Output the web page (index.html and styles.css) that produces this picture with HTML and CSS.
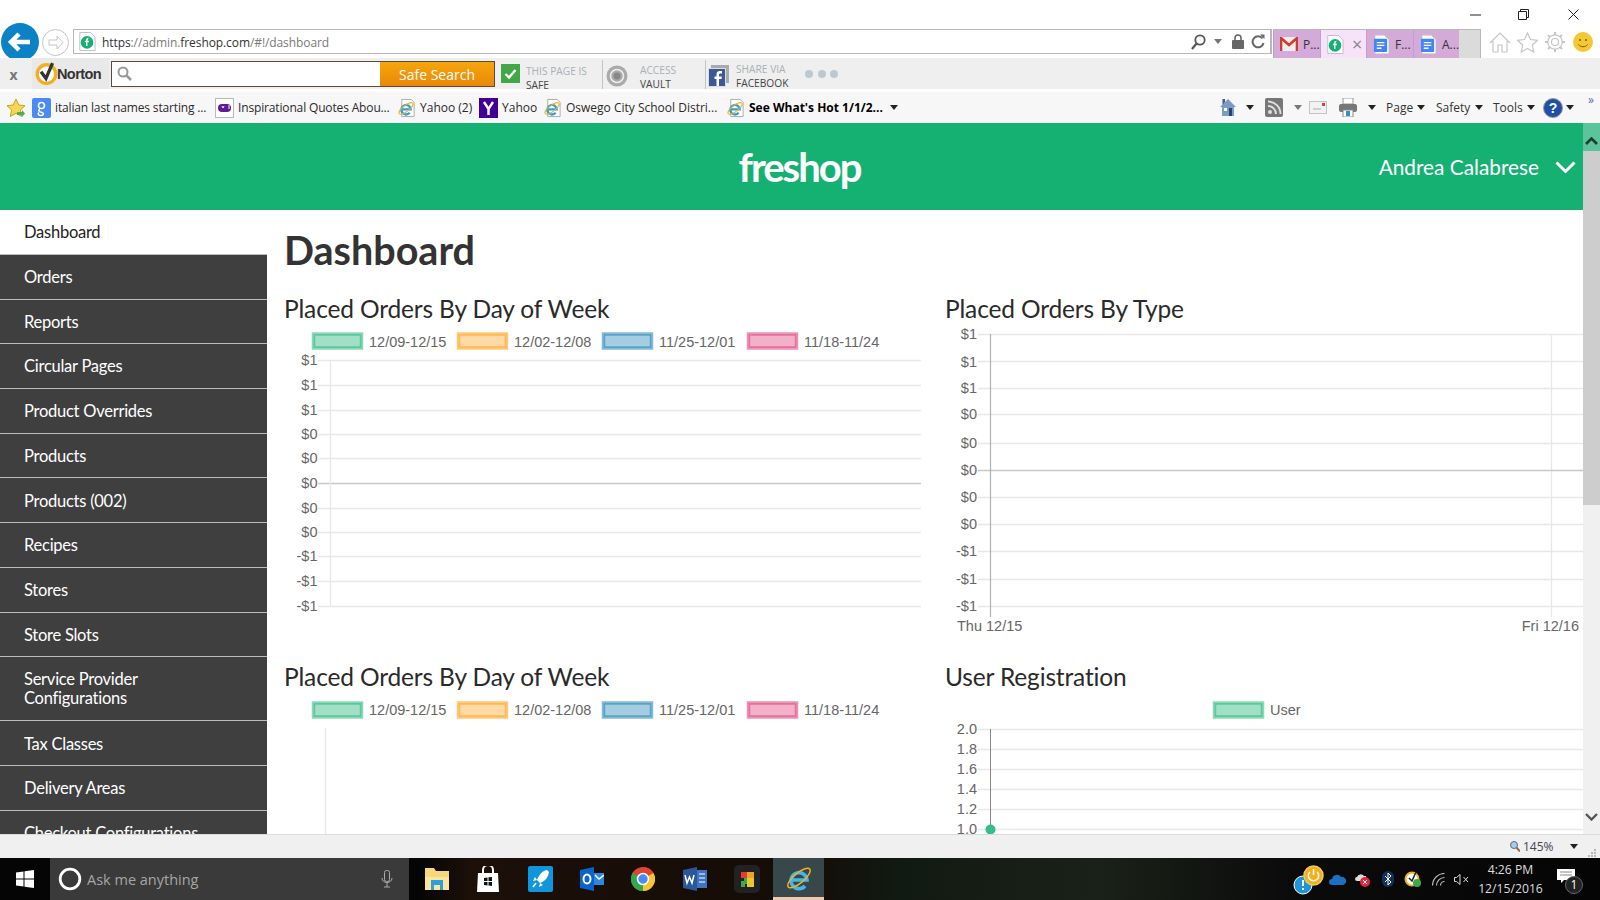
FILE: index.html
```html
<!DOCTYPE html>
<html lang="en">
<head>
<meta charset="utf-8">
<title>Freshop Dashboard</title>
<link rel="stylesheet" href="styles.css">
</head>
<body>
<svg class="defs" width="0" height="0" aria-hidden="true">
  <symbol id="ie" viewBox="0 0 20 20">
    <path d="M5 1h10l3 3v15H5z" fill="#fff" stroke="#a9a9a9"/>
    <path d="M4.5 11.5h10a5 5 0 1 0-1.2 3.6" fill="none" stroke="#2f9fe0" stroke-width="2.4"/>
    <ellipse cx="9.5" cy="10.5" rx="9" ry="3.2" transform="rotate(-38 9.5 10.5)" fill="none" stroke="#f2b01e" stroke-width="1.1"/>
  </symbol>
  <symbol id="doc" viewBox="0 0 18 20">
    <path d="M2 0h10l5 5v15H2z" fill="#fff" stroke="#bbb"/>
    <rect x="1" y="4" width="14" height="14" rx="1" fill="#4285f4"/>
    <path d="M4 8h8M4 11h8M4 14h5" stroke="#fff" stroke-width="1.4"/>
  </symbol>
  <symbol id="fresh" viewBox="0 0 20 20">
    <path d="M2 0h12l5 5v15H2z" fill="#fff" stroke="#bbb"/>
    <circle cx="10" cy="11" r="7" fill="#15b172"/>
    <path d="M11.5 6.5c-1.5 0-1.8 1-1.8 2.5v6M8 10h4" fill="none" stroke="#fff" stroke-width="1.6"/>
  </symbol>
</svg>

<div class="winrow">
  <svg class="winctl w-min" width="11" height="2"><path d="M0 1h11" stroke="#222"/></svg>
  <svg class="winctl w-max" width="11" height="11"><path d="M.5 2.5h8v8h-8zM2.5 2.5v-2h8v8h-2" fill="none" stroke="#222"/></svg>
  <svg class="winctl w-cls" width="11" height="11"><path d="M.5.5l10 10M10.5.5l-10 10" stroke="#222"/></svg>
</div>

<div class="navrow">
  <svg class="back" width="38" height="38" viewBox="0 0 38 38"><circle cx="19" cy="19" r="19" fill="#0b82c6"/><path d="M29 19H11M18 11l-8 8 8 8" fill="none" stroke="#fff" stroke-width="4.5"/></svg>
  <svg class="fwd" width="27" height="27" viewBox="0 0 27 27"><circle cx="13.5" cy="13.5" r="13" fill="#fff" stroke="#c4c4c4"/><path d="M7 11h8V7l6 6.500-6 6.500v-4H7z" fill="none" stroke="#c4c4c4"/></svg>
  <div class="addr">
    <svg class="favicon" width="18" height="19"><use href="#fresh"/></svg>
    <span class="url"><span class="dk">https</span>://admin.<span class="dk">freshop.com</span>/#!/dashboard</span>
    <svg class="a-search" width="15" height="16" viewBox="0 0 15 16"><circle cx="9" cy="6" r="4.700" fill="none" stroke="#555" stroke-width="1.800"/><path d="M5.500 9.500L1 15" stroke="#555" stroke-width="2.200"/></svg>
    <span class="caret gray a-caret"></span>
    <svg class="a-lock" width="12" height="15" viewBox="0 0 12 15"><path d="M3 7V4a3 3 0 0 1 6 0v3" fill="none" stroke="#666" stroke-width="1.600"/><rect y="6" width="12" height="9" rx="1" fill="#666"/></svg>
    <svg class="a-ref" width="14" height="15" viewBox="0 0 14 15"><path d="M11.500 4.500A5.500 5.500 0 1 0 12.500 9" fill="none" stroke="#666" stroke-width="2"/><path d="M9 .5h4.500V5z" fill="#666"/></svg>
  </div>
  <div class="tabs">
    <div class="tab tab-1">
      <svg width="18" height="14" viewBox="0 0 18 14"><rect width="18" height="14" fill="#eee"/><path d="M1 14V1l8 7 8-7v13" fill="none" stroke="#d5392c" stroke-width="2.600"/></svg>
      <span>P...</span>
    </div>
    <div class="tab tab-on">
      <svg width="18" height="19"><use href="#fresh"/></svg>
      <span class="tabx">×</span>
    </div>
    <div class="tab tab-3"><svg width="17" height="19"><use href="#doc"/></svg><span>F...</span></div>
    <div class="tab tab-4"><svg width="17" height="19"><use href="#doc"/></svg><span>A...</span></div>
    <div class="tab-new"></div>
  </div>
  <svg class="t-home" width="22" height="21" viewBox="0 0 22 21"><path d="M1 11L11 1l10 10M4 9v11h5v-7h4v7h5V9" fill="none" stroke="#c6c6c6" stroke-width="1.200"/></svg>
  <svg class="t-star" width="21" height="21" viewBox="0 0 21 21"><path d="M10.500 1l3 6.500 7 .8-5.200 4.700 1.400 7-6.200-3.500L4.300 20l1.400-7L.5 8.300l7-.8z" fill="none" stroke="#c6c6c6" stroke-width="1.200"/></svg>
  <svg class="t-gear" width="20" height="20" viewBox="0 0 20 20"><circle cx="10" cy="10" r="3.500" fill="none" stroke="#c6c6c6" stroke-width="1.200"/><circle cx="10" cy="10" r="7.200" fill="none" stroke="#c6c6c6" stroke-width="1.200"/><path d="M10 0v3M10 17v3M0 10h3M17 10h3M3 3l2 2M15 15l2 2M17 3l-2 2M5 15l-2 2" stroke="#c6c6c6" stroke-width="2"/></svg>
  <svg class="t-smile" width="20" height="20" viewBox="0 0 20 20"><circle cx="10" cy="10" r="10" fill="#f3c832"/><circle cx="7" cy="8" r="1" fill="#7a5a10"/><circle cx="13" cy="8" r="1" fill="#7a5a10"/><path d="M5.500 12.500c2 3 7 3 9 0" fill="none" stroke="#7a5a10"/></svg>
</div>

<div class="nortonbar">
  <span class="n-close">x</span>
  <div class="n-logo">
    <svg width="23" height="23" viewBox="0 0 21 21"><circle cx="10.500" cy="11" r="8.500" fill="#fff" stroke="#f2b01e" stroke-width="3"/><path d="M5.500 9l4.500 6 6-14" fill="none" stroke="#333" stroke-width="3"/></svg>
    <span>Norton</span>
  </div>
  <div class="n-search">
    <svg class="n-glass" width="15" height="15" viewBox="0 0 15 15"><circle cx="6" cy="6" r="4.500" fill="none" stroke="#999" stroke-width="2"/><path d="M9.500 9.500L14 14" stroke="#999" stroke-width="2.500"/></svg>
    <span class="n-btn">Safe Search</span>
  </div>
  <svg class="n-check" width="19" height="19" viewBox="0 0 19 19"><rect width="19" height="19" fill="#43a748"/><path d="M4.500 10l3.500 3.500 6.500-7.500" fill="none" stroke="#fff" stroke-width="2.400"/></svg>
  <div class="n-txt n-safe"><span>THIS PAGE IS</span><b>SAFE</b></div>
  <div class="n-sec n-access">
    <svg width="22" height="22" viewBox="0 0 22 22"><circle cx="11" cy="11" r="10.500" fill="#aaa"/><circle cx="11" cy="11" r="6.500" fill="none" stroke="#eee" stroke-width="1.500"/><circle cx="11" cy="11" r="3.500" fill="#888"/></svg>
    <div class="n-txt"><span>ACCESS</span><b>VAULT</b></div>
  </div>
  <div class="n-sec n-share">
    <svg width="21" height="22" viewBox="0 0 21 22"><rect x="3" y="0" width="18" height="18" fill="#aaa"/><rect y="3" width="18" height="19" fill="#ddd"/><rect x="1" y="4" width="16" height="17" fill="#3b5998"/><path d="M11 21v-7h2.500l.4-2.500H11V10c0-1 .4-1.500 1.500-1.500H14V6h-2.200C9.500 6 8.500 7.500 8.500 9.500v2H6.500V14h2v7z" fill="#fff"/></svg>
    <div class="n-txt"><span>SHARE VIA</span><b>FACEBOOK</b></div>
  </div>
  <div class="n-dots"><i></i><i></i><i></i></div>
</div>

<div class="favbar">
  <svg class="f-star" width="20" height="20" viewBox="0 0 20 20"><path d="M10 1l2.800 6 6.200.7-4.600 4.300 1.300 6.500L10 15.300 4.300 18.500 5.600 12 1 7.700 7.200 7z" fill="#f5d552" stroke="#c9a227"/><path d="M11 14h5v-2l3 3.500-3 3.500v-2h-5z" fill="#4caf50"/></svg>
  <div class="fav f1">
    <svg width="19" height="20" viewBox="0 0 19 20"><rect width="19" height="20" rx="2" fill="#4a8af4"/><circle cx="9.500" cy="7.500" r="3" fill="none" stroke="#fff" stroke-width="1.600"/><path d="M8 11c-3 2 0 3 2 3.500s2 3-1 3-3.500-2-2-3" fill="none" stroke="#fff" stroke-width="1.500"/></svg>
    <span class="f-t tight w1">italian last names starting ...</span>
  </div>
  <div class="fav f2">
    <svg width="19" height="20" viewBox="0 0 19 20"><rect x=".5" y=".5" width="18" height="19" fill="#fff" stroke="#bbb"/><rect x="3" y="6" width="13" height="8" rx="4" fill="#5f1b94"/><path d="M7 8l1 2 1-2M14 7v4" stroke="#fff"/></svg>
    <span class="f-t tight w2">Inspirational Quotes Abou...</span>
  </div>
  <div class="fav f3"><svg width="19" height="20"><use href="#ie"/></svg><span class="f-t w3">Yahoo (2)</span></div>
  <div class="fav f4">
    <svg width="19" height="20" viewBox="0 0 19 20"><rect width="19" height="20" fill="#410093"/><path d="M5 4l4.500 7L14 4M9.500 10v7" fill="none" stroke="#fff" stroke-width="2.400"/></svg>
    <span class="f-t w4">Yahoo</span>
  </div>
  <div class="fav f5"><svg width="19" height="20"><use href="#ie"/></svg><span class="f-t w5">Oswego City School Distri...</span></div>
  <div class="fav f6"><svg width="19" height="20"><use href="#ie"/></svg><span class="f-t f-bold w6">See What's Hot 1/1/2...</span></div>
  <span class="caret dark c-hot"></span>

  <div class="cmds">
    <svg class="cm-home" width="16" height="17" viewBox="0 0 16 17"><path d="M0 8l8-8 8 8h-2v9H2V8z" fill="#7d9cc5"/><path d="M2.500 0h2.500v3L2.500 6z" fill="#3d5f91"/><rect x="4" y="9" width="3" height="3" fill="#fff"/><rect x="9" y="9" width="3" height="8" fill="#23466f"/></svg>
    <span class="caret dark m10"></span>
    <svg class="m11" width="18" height="19" viewBox="0 0 18 19"><rect width="18" height="19" rx="2" fill="#777"/><circle cx="5" cy="14" r="2" fill="#ddd"/><path d="M3 8a8 8 0 0 1 8 8M3 3.500a12.500 12.500 0 0 1 12.500 12.500" fill="none" stroke="#ddd" stroke-width="2"/></svg>
    <span class="caret mid m11"></span>
    <svg class="m7" width="18" height="13" viewBox="0 0 18 13"><rect x=".5" y=".5" width="17" height="12" fill="#f2f2f2" stroke="#c4c4c4"/><rect x="13" y="2" width="3" height="3" fill="#e63946"/><path d="M4 8h8" stroke="#aaa"/></svg>
    <svg class="m12" width="18" height="19" viewBox="0 0 18 19"><rect x="4" width="10" height="6" fill="#fff" stroke="#999"/><rect y="6" width="18" height="8" rx="2" fill="#777"/><rect x="4" y="12" width="10" height="7" fill="#fff" stroke="#888"/><rect x="7" y="13" width="4" height="5" fill="#2b8fd0"/></svg>
    <span class="caret dark m11"></span>
    <span class="cm-t m10 wp">Page</span><span class="caret dark m5"></span>
    <span class="cm-t m11 ws">Safety</span><span class="caret dark m5"></span>
    <span class="cm-t m10 wt">Tools</span><span class="caret dark m4"></span>
    <svg class="m8" width="20" height="20" viewBox="0 0 20 20"><circle cx="10" cy="10" r="9.500" fill="#1f4fa8" stroke="#999"/><text x="10" y="15" class="help-q">?</text></svg>
    <span class="caret dark m3"></span>
    <span class="cm-more">»</span>
  </div>
</div>

<div class="page">
  <div class="viewport">
    <header class="header">
      <span class="logo">freshop</span>
      <div class="user">
        <span>Andrea Calabrese</span>
        <svg class="u-chev" width="21" height="13" viewBox="0 0 21 13"><path d="M1.500 1.500l9 9 9-9" fill="none" stroke="#fff" stroke-width="3"/></svg>
      </div>
    </header>
    <div class="body">
      <nav class="sidebar">
        <a class="item first">Dashboard</a>
        <a class="item">Orders</a>
        <a class="item">Reports</a>
        <a class="item">Circular Pages</a>
        <a class="item">Product Overrides</a>
        <a class="item">Products</a>
        <a class="item">Products (002)</a>
        <a class="item">Recipes</a>
        <a class="item">Stores</a>
        <a class="item">Store Slots</a>
        <a class="item tall">Service Provider Configurations</a>
        <a class="item">Tax Classes</a>
        <a class="item">Delivery Areas</a>
        <a class="item">Checkout Configurations</a>
      </nav>
      <main class="content">
        <h1>Dashboard</h1>
        <div class="charts">
          <section class="card">
            <h3>Placed Orders By Day of Week</h3>
            <svg class="chart" width="636" height="337" viewBox="0 0 636 337">
              <g class="lg-g"><rect x="28.500" y="9" width="48" height="14"/></g><text x="84" y="21.500">12/09-12/15</text>
              <g class="lg-o"><rect x="173.500" y="9" width="48" height="14"/></g><text x="229" y="21.500">12/02-12/08</text>
              <g class="lg-b"><rect x="318.500" y="9" width="48" height="14"/></g><text x="374" y="21.500">11/25-12/01</text>
              <g class="lg-p"><rect x="463.500" y="9" width="48" height="14"/></g><text x="519" y="21.500">11/18-11/24</text>
              <path class="grid" d="M33 35.500H636M33 60.500H636M33 85.500H636M33 109.500H636M33 133.500H636M33 183.500H636M33 207.500H636M33 231.500H636M33 256.500H636M33 281.500H636"/>
              <path class="zero" d="M33 158.500H636"/>
              <path class="grid" d="M45.500 35V282"/>
              <g class="ylab">
                <text x="32.500" y="40">$1</text><text x="32.500" y="65">$1</text><text x="32.500" y="90">$1</text><text x="32.500" y="114">$0</text><text x="32.500" y="138">$0</text><text x="32.500" y="163">$0</text><text x="32.500" y="188">$0</text><text x="32.500" y="212">$0</text><text x="32.500" y="236">-$1</text><text x="32.500" y="261">-$1</text><text x="32.500" y="286">-$1</text>
              </g>
            </svg>
          </section>
          <section class="card">
            <h3>Placed Orders By Type</h3>
            <svg class="chart" width="638" height="337" viewBox="0 0 638 337">
              <path class="grid" d="M33 9.500H638M33 36.500H638M33 63.500H638M33 89.500H638M33 118.500H638M33 172.500H638M33 199.500H638M33 226.500H638M33 254.500H638M33 281.500H638M606.500 9V292"/>
              <path class="zero" d="M33 145.500H638"/>
              <path class="axis" d="M45.500 9V292"/>
              <g class="ylab">
                <text x="32" y="14">$1</text><text x="32" y="42">$1</text><text x="32" y="68">$1</text><text x="32" y="94">$0</text><text x="32" y="123">$0</text><text x="32" y="150">$0</text><text x="32" y="177">$0</text><text x="32" y="204">$0</text><text x="32" y="231">-$1</text><text x="32" y="259">-$1</text><text x="32" y="286">-$1</text>
              </g>
              <text x="12" y="306">Thu 12/15</text>
              <text class="end" x="634" y="306">Fri 12/16</text>
            </svg>
          </section>
          <section class="card">
            <h3>Placed Orders By Day of Week</h3>
            <svg class="chart" width="636" height="337" viewBox="0 0 636 337">
              <g class="lg-g"><rect x="28.500" y="9" width="48" height="14"/></g><text x="84" y="21">12/09-12/15</text>
              <g class="lg-o"><rect x="173.500" y="9" width="48" height="14"/></g><text x="229" y="21">12/02-12/08</text>
              <g class="lg-b"><rect x="318.500" y="9" width="48" height="14"/></g><text x="374" y="21">11/25-12/01</text>
              <g class="lg-p"><rect x="463.500" y="9" width="48" height="14"/></g><text x="519" y="21">11/18-11/24</text>
              <path class="grid" d="M40.500 34V337"/>
            </svg>
          </section>
          <section class="card">
            <h3>User Registration</h3>
            <svg class="chart" width="638" height="337" viewBox="0 0 638 337">
              <g class="lg-g"><rect x="269.500" y="9" width="48" height="14"/></g><text x="325" y="21">User</text>
              <path class="grid" d="M33 35.500H638M33 55.500H638M33 75.500H638M33 95.500H638M33 115.500H638M33 135.500H638"/>
              <path class="axis2" d="M45.500 35V140"/>
              <circle cx="45.500" cy="135.500" r="5" fill="#35bd8a"/>
              <g class="ylab">
                <text x="32" y="40">2.0</text><text x="32" y="60">1.8</text><text x="32" y="80">1.6</text><text x="32" y="100">1.4</text><text x="32" y="120">1.2</text><text x="32" y="140">1.0</text>
              </g>
            </svg>
          </section>
        </div>
      </main>
    </div>
  </div>
  <aside class="scroll">
    <div class="sc-up"><svg width="13" height="8" viewBox="0 0 13 8"><path d="M1 7l5.500-5.500L12 7" fill="none" stroke="#1f3d31" stroke-width="2.600"/></svg></div>
    <div class="sc-thumb"></div>
    <div class="sc-track"></div>
    <div class="sc-down"><svg width="13" height="8" viewBox="0 0 13 8"><path d="M1 1l5.500 5.500L12 1" fill="none" stroke="#555" stroke-width="2.400"/></svg></div>
  </aside>
</div>

<footer class="status">
  <svg class="st-zoom" width="10" height="11" viewBox="0 0 10 11"><circle cx="4" cy="4" r="3.500" fill="#9ed0ef" stroke="#667"/><path d="M6.500 6.500L10 10.500" stroke="#964" stroke-width="2"/></svg>
  <span class="st-pct">145%</span>
  <span class="caret dark st-caret"></span>
  <svg class="st-grip" width="10" height="10" viewBox="0 0 10 10"><path d="M7 1h2v2H7zM4 4h2v2H4zM7 4h2v2H7zM1 7h2v2H1zM4 7h2v2H4zM7 7h2v2H7z" fill="#b8b8b8"/></svg>
</footer>

<div class="taskbar">
  <div class="tb-start">
    <svg width="18" height="18" viewBox="0 0 18 18"><path d="M0 2.500l7.500-1v7H0zM8.500 1.300L18 0v8.500H8.500zM0 9.500h7.500v7L0 15.500zM8.500 9.500H18V18l-9.500-1.300z" fill="#fff"/></svg>
  </div>
  <div class="tb-search">
    <svg width="24" height="24" viewBox="0 0 24 24"><circle cx="12" cy="12" r="9.800" fill="none" stroke="#fff" stroke-width="2.800"/></svg>
    <span class="tb-ask">Ask me anything</span>
    <svg class="tb-mic" width="12" height="18" viewBox="0 0 12 18"><rect x="3.500" y=".5" width="5" height="11" rx="2" fill="none" stroke="#aaa"/><path d="M1 8c0 6 10 6 10 0M6 13v4M3 17h6" fill="none" stroke="#aaa"/></svg>
  </div>
  <svg class="tb-i i1" width="24" height="22" viewBox="0 0 24 22"><path d="M0 0h9l2 3h13v19H0z" fill="#f6d77a"/><rect y="9" width="24" height="13" fill="#fbe59b"/><rect x="6" y="12" width="12" height="10" fill="#2b9fe0"/><rect x="9" y="17" width="6" height="5" fill="#fbe59b"/></svg>
  <svg class="tb-i i2" width="24" height="26" viewBox="0 0 24 26"><path d="M2 7h20l1 19H1z" fill="#fff"/><path d="M7 8V4a5 5 0 0 1 10 0v4" fill="none" stroke="#fff" stroke-width="2"/><path d="M8 12l3.500-.5V15H8zM12.500 11.300L16 11v4h-3.500zM8 16h3.500v3.500L8 19zM12.500 16H16v4l-3.500-.4z" fill="#111"/></svg>
  <svg class="tb-i i3" width="25" height="26" viewBox="0 0 25 26"><rect width="25" height="26" rx="2" fill="#1296db"/><path d="M19 4c-5 1-8 5-10 10l3 3c5-2 8-5 9-11zM9 14l-4 1 2-4zM12 17l-1 4 4-2z" fill="#fff"/><path d="M8 17l-3 4" stroke="#fff" stroke-width="1.500"/></svg>
  <svg class="tb-i i4" width="24" height="24" viewBox="0 0 24 24"><path d="M0 3l14-3v24L0 21z" fill="#0a63c9"/><rect x="14" y="6" width="10" height="12" fill="#2a8ae0"/><ellipse cx="7" cy="12" rx="3.500" ry="4.500" fill="none" stroke="#fff" stroke-width="2"/><path d="M15 8l4 4 5-4" fill="none" stroke="#fff" stroke-width="1.400"/></svg>
  <svg class="tb-i i5" width="24" height="24" viewBox="0 0 24 24"><circle cx="12" cy="12" r="12" fill="#e0442f"/><path d="M12 12L1.600 6A12 12 0 0 0 12 24z" fill="#2fa84f"/><path d="M12 12v12A12 12 0 0 0 22.400 6z" fill="#f6c62e"/><path d="M12 0a12 12 0 0 1 10.400 6H12z" fill="#e0442f"/><circle cx="12" cy="12" r="5.500" fill="#4a8af4" stroke="#fff" stroke-width="1.600"/></svg>
  <svg class="tb-i i6" width="24" height="24" viewBox="0 0 24 24"><path d="M0 3l14-3v24L0 21z" fill="#2b579a"/><rect x="14" y="3" width="10" height="18" fill="#3f74c2"/><path d="M16 7h6M16 11h6M16 15h6" stroke="#fff"/><path d="M2 8l2 8 2.500-6 2.500 6 2-8" fill="none" stroke="#fff" stroke-width="1.500"/></svg>
  <svg class="tb-i i7" width="26" height="28" viewBox="0 0 26 28"><rect width="26" height="28" rx="5" fill="#222"/><path d="M7 7h5v3h3V7h5v6h-3v3h3v6h-6v-3h-3v3H7v-6h3v-3H7z" fill="#3cab47"/><path d="M7 7h6v6H7z" fill="#e23c33"/><path d="M13 7h7v6h-7z" fill="#f0a02c"/><path d="M13 13h7v9h-7z" fill="#e7c92c"/></svg>
  <div class="tb-ie">
    <svg width="28" height="28" viewBox="0 0 28 28"><path d="M6 16h16a8 8 0 1 0-2 6" fill="none" stroke="#41b6ef" stroke-width="3.600"/><ellipse cx="14" cy="14" rx="14" ry="5" transform="rotate(-40 14 14)" fill="none" stroke="#f1b21e" stroke-width="1.500"/></svg>
  </div>
  <div class="tray">
    <div class="tr-alert">
      <svg class="tr-blue" width="20" height="20" viewBox="0 0 20 20"><circle cx="10" cy="10" r="9" fill="#1f96da" stroke="#fff"/><path d="M10 5v6M10 13v2" stroke="#fff" stroke-width="2"/></svg>
      <svg class="tr-power" width="21" height="21" viewBox="0 0 21 21"><circle cx="10.500" cy="10.500" r="9.500" fill="#f2b01e" stroke="#f6c766" stroke-width="1.500"/><path d="M6.800 7a5.200 5.200 0 1 0 7.400 0M10.500 4v6" fill="none" stroke="#fff" stroke-width="1.500"/></svg>
    </div>
    <svg class="tr-i r1" width="17" height="11" viewBox="0 0 17 11"><path d="M3 11a3 3 0 0 1 0-6 5 5 0 0 1 9-2 4 4 0 0 1 2 8z" fill="#1d6fc4"/></svg>
    <svg class="tr-i r2" width="15" height="15" viewBox="0 0 15 15"><path d="M2 9a2 2 0 0 1 0-4 4 4 0 0 1 7-1h2v5z" fill="#ddd"/><circle cx="10" cy="10" r="5" fill="#e3263a"/><path d="M8 8l4 4M12 8l-4 4" stroke="#fff"/></svg>
    <svg class="tr-i r3" width="12" height="16" viewBox="0 0 12 16"><rect width="12" height="16" rx="6" fill="#12305f"/><path d="M3 5l6 6-3 3V2l3 3-6 6" fill="none" stroke="#fff"/></svg>
    <svg class="tr-i r4" width="17" height="16" viewBox="0 0 17 16"><circle cx="8" cy="8" r="6.500" fill="#fff" stroke="#f2b01e" stroke-width="2"/><path d="M5 7l3 3 4-9" fill="none" stroke="#222" stroke-width="1.500"/><circle cx="13" cy="12" r="4" fill="#3cab47"/></svg>
    <svg class="tr-i r5" width="13" height="13" viewBox="0 0 13 13"><path d="M8.500 12.500a4 4 0 0 1 4-4M4.500 12.500a8 8 0 0 1 8-8M.5 12.500a12 12 0 0 1 12-12" fill="none" stroke="#bbb" stroke-width="1.200"/></svg>
    <svg class="tr-i r6" width="15" height="11" viewBox="0 0 15 11"><path d="M.5 3.500h2L6 .5v10l-3.500-3h-2zM9.500 3l4.500 5M14 3l-4.500 5" fill="none" stroke="#ddd"/></svg>
    <div class="clock"><span>4:26 PM</span><span>12/15/2016</span></div>
    <div class="notif">
      <svg width="18" height="14" viewBox="0 0 18 14"><path d="M0 0h18v11H7l-3 3v-3H0z" fill="#fff"/><path d="M3 3h12M3 6h12" stroke="#888"/></svg>
      <span class="badge">1</span>
    </div>
  </div>
</div>
</body>
</html>
```

FILE: styles.css
```css
* { box-sizing: border-box; }
html, body { margin: 0; padding: 0; }
body {
  width: 1600px;
  height: 900px;
  overflow: hidden;
  display: flex;
  flex-direction: column;
  background: #fff;
  font-family: "Open Sans", "Liberation Sans", sans-serif;
}
svg { display: block; flex: none; }
.defs { position: absolute; }

/* generic caret */
.caret { flex: none; width: 0; height: 0; border-left: 4px solid transparent; border-right: 4px solid transparent; border-top: 5px solid #222; }
.caret.gray, .caret.mid { border-top-color: #777; }

/* window row */
.winrow { height: 29px; flex: none; display: flex; align-items: center; padding-right: 21px; justify-content: flex-end; }
.w-min { margin-right: 37px; }
.w-max { margin-right: 39px; }

/* nav row */
.navrow { height: 29px; flex: none; display: flex; align-items: flex-start; }
.back { margin: -6px 0 0 1px; }
.fwd { margin: 0 0 0 3px; }
.addr { margin-left: 4px; width: 1199px; height: 25px; border: 1px solid #b8b8b8; border-right-width: 2px; display: flex; align-items: center; padding-left: 4px; }
.favicon { margin-right: 6px; }
.url { width: 1089px; font-size: 12px; letter-spacing: -.09px; color: #7a7a7a; white-space: nowrap; padding-top: 2px; }
.dk { color: #333; }
.a-caret { margin: 0 10px 0 8px; }
.a-lock { margin-right: 7px; }
.tabs { margin-left: 1px; width: 208px; height: 29px; display: flex; border-top: 1px solid #b8b8b8; border-right: 1px solid #b8b8b8; }
.tab { background: #d4aad9; height: 100%; display: flex; align-items: center; gap: 5px; padding-left: 6px; font-size: 12px; color: #333; border-left: 1px solid #c69cca; }
.tab-1 { width: 47px; }
.tab-on { width: 46px; background: #f6e3f9; padding-left: 5px; gap: 8px; }
.tab-3 { width: 47px; }
.tab-4 { width: 46px; }
.tabx { color: #888; font-size: 18px; line-height: 18px; }
.tab-new { flex: 1; background: #dbdbdb; }
.t-home { margin: 3px 0 0 8px; }
.t-star { margin: 3px 0 0 6px; }
.t-gear { margin: 3px 0 0 7px; }
.t-smile { margin: 3px 0 0 8px; }

/* Norton */
.nortonbar { height: 31px; flex: none; background: #efefef; display: flex; align-items: center; overflow: hidden; }
.n-close { width: 32px; flex: none; text-align: center; color: #777; font-weight: 700; font-size: 14px; padding: 2px 5px 0 0; }
.n-logo { width: 77px; height: 100%; flex: none; background: #e9e9e9; display: flex; align-items: center; padding-left: 3px; }
.n-logo span { margin-left: -1px; font-family: "Liberation Sans", sans-serif; font-weight: 700; font-size: 14.500px; letter-spacing: -.6px; color: #333; }
.n-search { margin-left: 2px; width: 384px; height: 26px; border: 1px solid #5a4a3a; background: #fff; display: flex; align-items: stretch; flex: none; }
.n-glass { margin: 4px 0 0 5px; }
.n-btn { margin-left: auto; width: 114px; background: linear-gradient(#f5a60c, #ea8808); color: #fff; font-size: 14px; text-align: center; line-height: 26px; }
.n-check { margin-left: 6px; }
.n-txt { display: flex; flex-direction: column; font-size: 10.200px; line-height: 14px; padding-top: 4px; white-space: nowrap; }
.n-txt span { color: #a9b0b6; }
.n-txt b { font-weight: 400; color: #444; }
.n-safe { margin-left: 6px; width: 76px; height: 100%; flex: none; padding-top: 6px; }
.n-sec { height: 100%; flex: none; display: flex; align-items: center; border-left: 1px solid #c4c4c4; margin-top: 4px; }
.n-sec .n-txt { height: 100%; }
.n-access { width: 103px; padding-left: 3px; gap: 12px; }
.n-access .n-txt { padding-top: 3px; }
.n-share { width: 90px; padding-left: 2px; gap: 7px; }
.n-share .n-txt { padding-top: 2px; }
.n-dots { margin-left: 10px; display: flex; gap: 4.500px; }
.n-dots i { width: 8px; height: 8px; border-radius: 50%; background: #bdc9d2; display: block; }

/* favorites */
.favbar { height: 34px; flex: none; background: linear-gradient(#fff 3px, #f7f7f7 3px); display: flex; align-items: center; padding: 3px 0 0 6px; }
.fav { display: flex; align-items: center; gap: 4px; margin-left: 7px; flex: none; }
.f1 { margin-left: 6px; }
.f2 { margin-left: 8px; }
.f-t { font-size: 12px; color: #2a2a2a; white-space: nowrap; display: block; }
.tight { letter-spacing: -.15px; }
.f-bold { font-weight: 700; color: #000; }
.w1 { width: 152px; }
.w2 { width: 152px; }
.w3 { width: 52px; }
.w4 { width: 34px; }
.w5 { width: 150px; }
.w6 { width: 136px; }
.f6 { margin-left: 10px; }
.c-hot { margin-left: 5px; }
.cmds { margin-left: auto; display: flex; align-items: center; padding-right: 4px; }
.cm-t { font-size: 12px; color: #333; }
.wp { width: 26px; }
.ws { width: 34px; }
.wt { width: 30px; }
.m3 { margin-left: 3px; }
.m4 { margin-left: 4px; }
.m5 { margin-left: 5px; }
.m7 { margin-left: 7px; }
.m8 { margin-left: 8px; }
.m10 { margin-left: 10px; }
.m11 { margin-left: 11px; }
.m12 { margin-left: 12px; }
.help-q { font: 700 14px "Liberation Sans", sans-serif; fill: #fff; text-anchor: middle; }
.cm-more { margin: -16px 0 0 14px; font-size: 12px; line-height: 12px; width: 8px; color: #4a6fa5; }

/* page */
.page { height: 711px; flex: none; display: flex; overflow: hidden; }
.viewport { width: 1583px; flex: none; display: flex; flex-direction: column; }
.header { height: 87px; flex: none; background: #15b172; display: grid; grid-template-columns: 1fr auto 1fr; align-items: center; padding: 0 7px 0 17px; color: #fff; font-family: Lato, sans-serif; }
.logo { grid-column: 2; padding-left: 6px; font-size: 40px; font-weight: 700; letter-spacing: -2px; line-height: 40px; }
.user { grid-column: 3; justify-self: end; display: flex; align-items: center; gap: 16px; font-size: 20.800px; }
.u-chev { margin-top: 1px; }
.body { flex: 1; min-height: 0; display: flex; overflow: hidden; font-family: Lato, sans-serif; }

.sidebar { width: 267px; flex: none; }
.item { display: flex; align-items: center; height: 44.700px; padding: .5px 24px 0; background: #3f3f3f; color: #fff; font-size: 16.500px; letter-spacing: -.25px; border-top: 1.500px solid #bdbdbd; white-space: nowrap; }
.item.first { height: 44px; background: #fff; color: #222; border-top: 0; padding-bottom: 0; }
.item.tall { height: 64.300px; white-space: normal; line-height: 19.500px; }

.content { flex: 1; min-width: 0; padding-left: 18px; color: #222; }
h1 { margin: 18px 0 21px -1px; font-size: 39.500px; line-height: 44px; font-weight: 700; color: #333; }
.charts { display: grid; grid-template-columns: 660px 638px; grid-auto-rows: 369px; }
.card { overflow: hidden; }
h3 { margin: 0; height: 32px; font-size: 24.500px; letter-spacing: -.15px; line-height: 32px; font-weight: 400; color: #2a2a2a; white-space: nowrap; }
.card:nth-child(odd) h3 { margin-left: -1px; }
.card:nth-child(n+3) h3 { line-height: 30px; }
.chart { font: 14.500px "Liberation Sans", sans-serif; fill: #666; }
.chart .end, .ylab text { text-anchor: end; }
.grid { fill: none; stroke: #e8e8e8; stroke-width: 1.400; }
.zero { fill: none; stroke: #c8c8c8; stroke-width: 1.400; }
.axis { fill: none; stroke: #b0b0b0; stroke-width: 1.200; }
.axis2 { fill: none; stroke: #888; stroke-width: 1; }
.lg-g rect { fill: rgba(21,177,114,.4); stroke: rgba(21,177,114,.5); stroke-width: 3.500px; }
.lg-o rect { fill: rgba(255,163,31,.4); stroke: rgba(255,163,31,.6); stroke-width: 3.500px; }
.lg-b rect { fill: rgba(30,130,180,.4); stroke: rgba(30,130,180,.55); stroke-width: 3.500px; }
.lg-p rect { fill: rgba(222,60,120,.4); stroke: rgba(222,60,120,.55); stroke-width: 3.500px; }

/* scrollbar */
.scroll { width: 17px; flex: none; background: #f0f0f0; display: flex; flex-direction: column; }
.sc-up { height: 28px; flex: none; background: #5cc49b; display: flex; justify-content: center; padding-top: 14px; }
.sc-thumb { height: 354px; flex: none; background: #cdcdcd; }
.sc-track { flex: 1; }
.sc-down { height: 28px; flex: none; display: flex; justify-content: center; padding-top: 7px; }

/* status */
.status { height: 24px; flex: none; background: #f0f0f0; border-top: 1px solid #dcdcdc; display: flex; align-items: center; padding-left: 1510px; font-size: 12px; color: #445; }
.st-pct { margin-left: 3px; width: 34px; }
.st-caret { margin-left: 13px; }
.st-grip { margin: 12px 0 0 9px; }

/* taskbar */
.taskbar { height: 42px; flex: none; display: flex; align-items: center; background: linear-gradient(90deg, #050505 0, #050505 420px, #1c1009 470px, #140c06 800px, #111a12 900px, #1a2118 1100px, #0b0b0b 1290px, #050505 1600px); color: #fff; }
.tb-start { width: 50px; flex: none; display: flex; justify-content: center; padding-right: 1px; }
.tb-search { width: 359px; height: 100%; flex: none; background: #3a3a3a; display: flex; align-items: center; padding-left: 8px; gap: 5px; }
.tb-ask { width: 289px; color: #a6a6a6; font-size: 14.500px; }
.i1 { margin-left: 16px; }
.i2 { margin-left: 27px; }
.i3 { margin-left: 28px; }
.i4 { margin-left: 27px; }
.i5 { margin-left: 27px; }
.i6 { margin-left: 28px; }
.i7 { margin-left: 27px; }
.tb-ie { margin-left: 13px; width: 51px; height: 100%; flex: none; background: #38474a; border-bottom: 3px solid #f0c9a8; display: flex; align-items: center; justify-content: center; }
.tray { margin-left: auto; display: flex; align-items: center; height: 100%; flex: none; }
.tr-alert { width: 30px; height: 100%; display: flex; align-items: flex-start; margin-right: 6px; }
.tr-blue { margin-top: 17px; }
.tr-power { margin: 7px 0 0 -10px; }
.r2 { margin-left: 9px; }
.r3 { margin-left: 12px; }
.r4 { margin-left: 10px; }
.r5 { margin-left: 11px; }
.r6 { margin-left: 9px; }
.clock { margin-left: 10px; width: 63px; display: flex; flex-direction: column; align-items: center; font-size: 12.200px; line-height: 19px; color: #ddd; white-space: nowrap; }
.notif { margin: 0 17px 0 15px; width: 26px; height: 100%; display: flex; padding-top: 11px; }
.badge { margin: 7px 0 0 -10px; width: 18px; height: 18px; border-radius: 50%; background: #222; border: 1px solid #666; color: #fff; font-size: 12px; line-height: 16px; text-align: center; flex: none; }
```
